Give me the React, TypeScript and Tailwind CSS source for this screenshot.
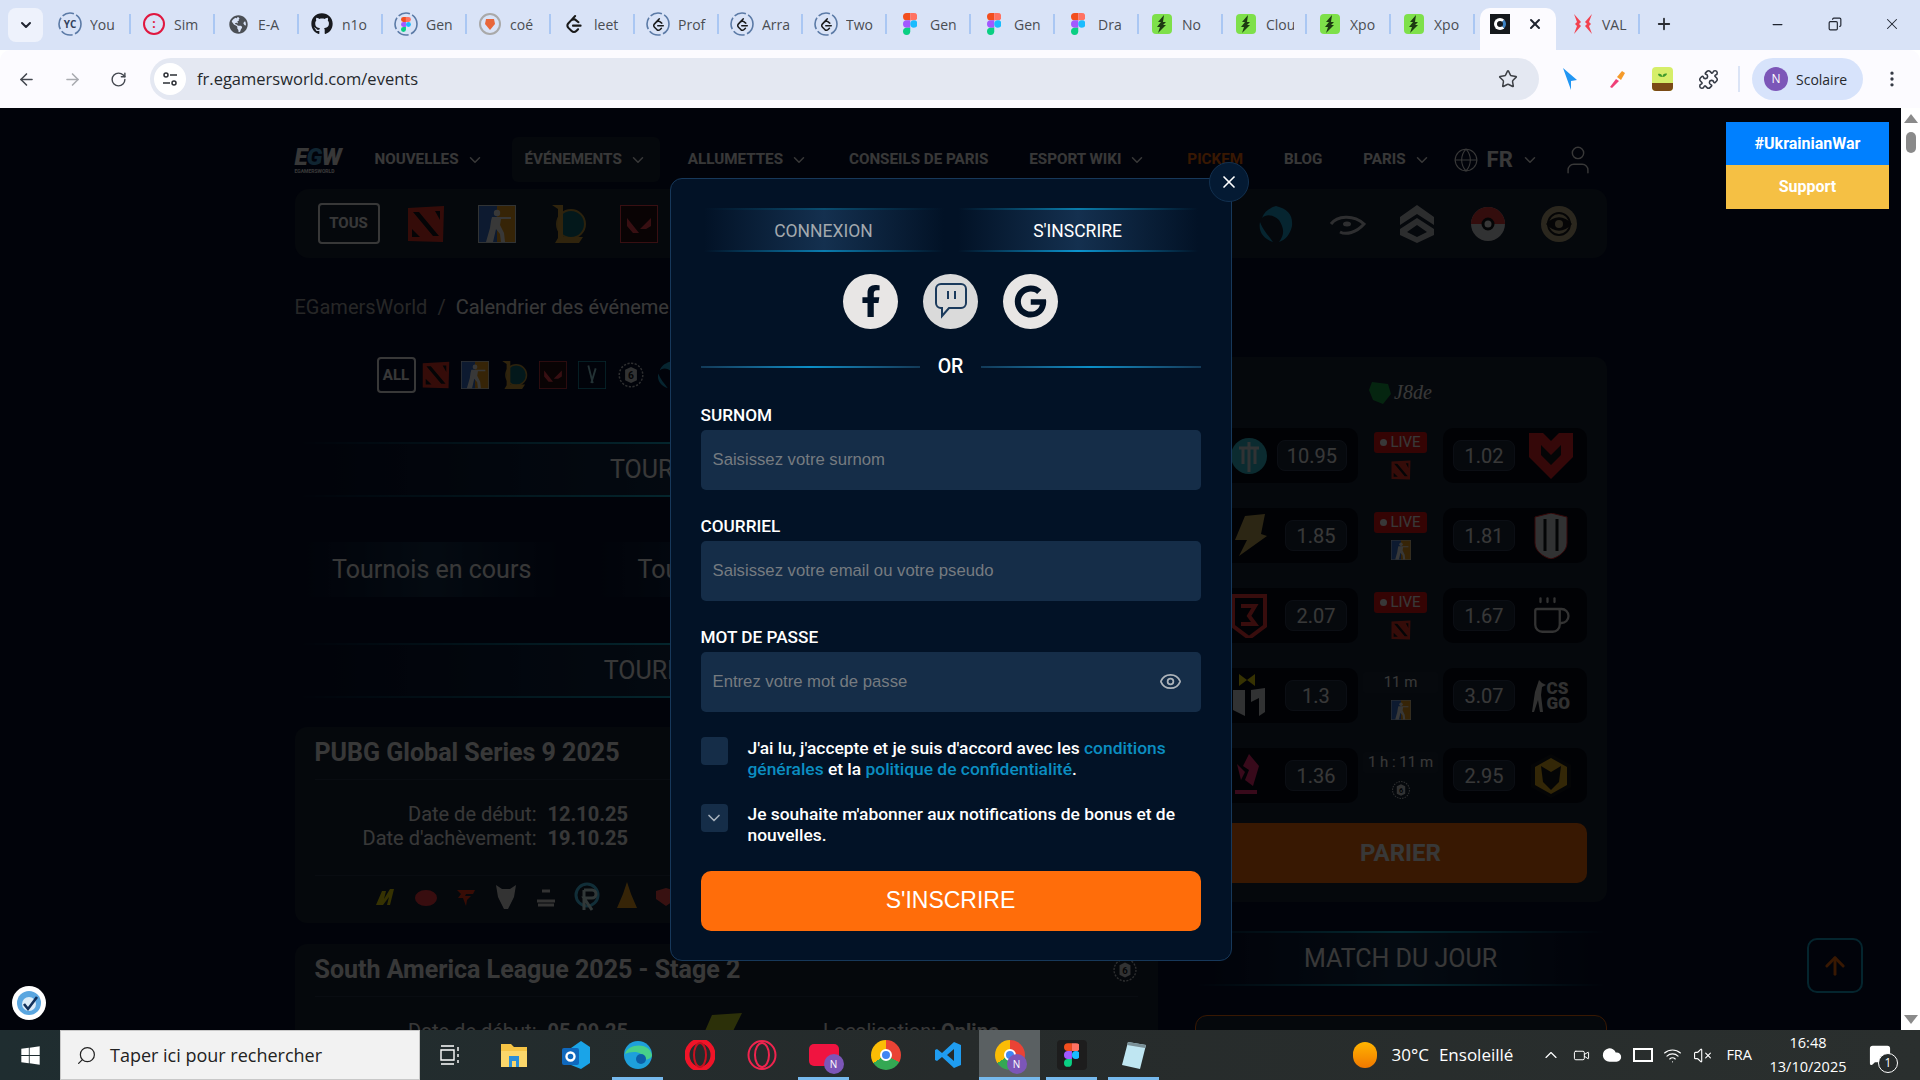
import { ArrowLeft, ArrowRight, RotateCw, Star, Puzzle, MoreVertical, Plus, Minus, X, ChevronDown, ChevronUp, Eye, Globe, User, ArrowUp, Search, Copy, Coffee, VolumeX, Wifi, Cloud, Video, MessageSquare } from 'lucide-react'
import { FaFacebookF, FaGoogle, FaGithub, FaGlobeAmericas, FaWindows } from 'react-icons/fa'
import { SiLeetcode } from 'react-icons/si'

const roboto = 'font-[Roboto,sans-serif]'

function FigmaLogo({ size = 22 }: { size?: number }) {
  return (
    <svg width={size * 0.66} height={size} viewBox="0 0 16 24">
      <path d="M8 0H4a4 4 0 0 0 0 8h4z" fill="#f24e1e" />
      <path d="M8 0h4a4 4 0 0 1 0 8H8z" fill="#ff7262" />
      <path d="M8 8H4a4 4 0 0 0 0 8h4z" fill="#a259ff" />
      <circle cx="12" cy="12" r="4" fill="#1abcfe" />
      <path d="M8 16H4a4 4 0 1 0 4 4z" fill="#0acf83" />
    </svg>
  )
}

function Ring({ children }: { children: React.ReactNode }) {
  return (
    <div className="relative flex h-6 w-6 items-center justify-center">
      <svg className="absolute inset-0" width="24" height="24" viewBox="0 0 24 24">
        <circle cx="12" cy="12" r="11" fill="none" stroke="#5b7aa6" strokeWidth="1.6" strokeDasharray="12 2.5" />
      </svg>
      {children}
    </div>
  )
}

function XpoIcon() {
  return (
    <div className="flex h-5 w-5 items-center justify-center rounded-[4px] bg-[#7ee04a]">
      <svg width="12" height="18" viewBox="0 0 12 18">
        <path d="M8 0 2 7h3L1 12h3l-2 6 8-8H7l3-3H7z" fill="#1d3a12" />
      </svg>
    </div>
  )
}

function Favicon({ kind }: { kind: string }) {
  if (kind === 'yc') return <Ring><span className="font-['Open_Sans',sans-serif] text-[10px] font-bold text-[#33415c]">YC</span></Ring>
  if (kind === 'sim')
    return (
      <div className="flex h-[22px] w-[22px] items-center justify-center rounded-full border-2 border-[#e0173f] text-[12px] font-bold leading-none text-[#e0173f]">:</div>
    )
  if (kind === 'globe') return <FaGlobeAmericas size={19} color="#4b4f55" />
  if (kind === 'github') return <FaGithub size={22} color="#181a1f" />
  if (kind === 'rfigma') return <Ring><FigmaLogo size={15} /></Ring>
  if (kind === 'brave')
    return (
      <div className="flex h-[22px] w-[22px] items-center justify-center rounded-full border-2 border-[#a9a9a9]">
        <svg width="10" height="12" viewBox="0 0 10 12"><path d="M1 1h8l1 5-5 6-5-6z" fill="#e8663a" /></svg>
      </div>
    )
  if (kind === 'leet') return <SiLeetcode size={18} color="#1a1a1a" />
  if (kind === 'rleet') return <Ring><SiLeetcode size={13} color="#1a1a1a" /></Ring>
  if (kind === 'figma') return <FigmaLogo />
  if (kind === 'xpo') return <XpoIcon />
  if (kind === 'egw')
    return (
      <div className="flex h-5 w-5 items-center justify-center bg-[#15181c]">
        <div className="h-3 w-3 rounded-full border-[3px] border-white border-r-[#3b82c4]" />
      </div>
    )
  return (
    <svg width="22" height="22" viewBox="0 0 22 22">
      <path d="M2 1l7 8-2 2 2 2-7 8 3-8-2-2 2-2zM20 1l-7 8 2 2-2 2 7 8-3-8 2-2-2-2z" fill="#f2414f" />
    </svg>
  )
}

const tabs = [
  ['yc', 'You'], ['sim', 'Sim'], ['globe', 'E-A'], ['github', 'n1o'], ['rfigma', 'Gen'], ['brave', 'coé'],
  ['leet', 'leet'], ['rleet', 'Prof'], ['rleet', 'Arra'], ['rleet', 'Two'], ['figma', 'Gen'], ['figma', 'Gen'],
  ['figma', 'Dra'], ['xpo', 'No'], ['xpo', 'Clou'], ['xpo', 'Xpo'], ['xpo', 'Xpo'],
]

function BrowserChrome() {
  return (
    <div className="font-['Open_Sans',sans-serif]">
      <div className="flex h-[50px] items-start bg-[#d9e3f7]">
        <div className="ml-2 mt-2 flex h-[34px] w-[35px] items-center justify-center rounded-lg bg-[#eef2fc]">
          <ChevronDown size={16} strokeWidth={3} color="#1f2430" />
        </div>
        <div className="ml-1 flex h-[50px]">
          {tabs.map(([kind, label], i) => (
            <div key={i} className="relative mt-[3px] flex h-[42px] w-[84px] items-center gap-[8px] self-start pl-[11px]">
              <div className="flex w-6 shrink-0 justify-center"><Favicon kind={kind} /></div>
              <span className="w-[28px] overflow-hidden whitespace-nowrap text-[14px] text-[#4a4d52]">{label}</span>
              <div className="absolute right-0 top-[11px] h-[20px] w-[2px] bg-[#aac7f3]" />
            </div>
          ))}
          <div className="ml-[5px] mt-[8px] flex h-[42px] w-[76px] items-start gap-[17px] rounded-t-[10px] bg-[#fcfbff] pl-[10px] pt-[6px]">
            <Favicon kind="egw" />
            <X size={16} strokeWidth={3} color="#1f2430" className="mt-[2px]" />
          </div>
          <div className="relative mt-[3px] flex h-[42px] w-[84px] items-center gap-[8px] self-start pl-4">
            <Favicon kind="val" />
            <span className="text-[14px] text-[#4a4d52]">VAL</span>
            <div className="absolute right-0 top-[11px] h-[20px] w-[2px] bg-[#aac7f3]" />
          </div>
          <div className="mt-[3px] flex h-[42px] w-[48px] items-center justify-center self-start">
            <Plus size={18} strokeWidth={2.4} color="#2a2d33" />
          </div>
        </div>
        <div className="ml-auto flex h-[50px] items-center pb-[2px]">
          <div className="flex w-[57px] justify-center"><Minus size={15} color="#1f2430" /></div>
          <div className="flex w-[57px] justify-center"><Copy size={14} color="#1f2430" className="-scale-x-100" /></div>
          <div className="flex w-[57px] justify-center"><X size={18} strokeWidth={1.4} color="#1f2430" /></div>
        </div>
      </div>
      <div className="flex h-[58px] items-center rounded-t-[10px] bg-[#fcfbff]">
        <div className="flex w-[52px] justify-center"><ArrowLeft size={19} color="#444850" /></div>
        <div className="flex w-[40px] justify-center"><ArrowRight size={19} color="#a9abb0" /></div>
        <div className="flex w-[52px] justify-center"><RotateCw size={17} color="#444850" /></div>
        <div className="ml-[6px] flex h-[42px] w-[1389px] items-center rounded-full bg-[#e4e8f2] pl-[4px]">
          <div className="flex h-[32px] w-[32px] items-center justify-center rounded-full bg-white">
            <svg width="16" height="16" viewBox="0 0 16 16" fill="none" stroke="#2d3036" strokeWidth="1.5">
              <circle cx="4" cy="4" r="2" /><path d="M8 4h7M1 12h7" /><circle cx="12" cy="12" r="2" />
            </svg>
          </div>
          <span className="ml-[11px] text-[16.5px] text-[#25282d]">fr.egamersworld.com/events</span>
          <Star size={20} strokeWidth={1.8} color="#3d4046" className="ml-auto mr-[21px]" />
        </div>
        <div className="ml-[16px] flex w-[30px] justify-center">
          <svg width="16" height="24" viewBox="0 0 16 24"><path d="M1 1l14 12-6 1v9z" fill="#2196f3" /></svg>
        </div>
        <div className="ml-[17px] flex w-[30px] justify-center">
          <svg width="20" height="20" viewBox="0 0 20 20"><path d="M3 18l6-8 3 2-7 7z" fill="#ef3f78" /><path d="M10 8l5-6 3 2-4 7z" fill="#f59a2a" /></svg>
        </div>
        <div className="relative ml-[20px] flex h-[24px] w-[21px] flex-col justify-end overflow-hidden rounded-[4px] bg-[#d6ee6a]">
          <svg className="absolute left-[5px] top-[5px]" width="11" height="10" viewBox="0 0 11 10"><path d="M5.5 10V5C5 2 3 1 1 2c0 2 2 3 4.5 3 0-3 2-4 4.5-3.500C10 3 8 5 5.500 5" fill="#3f9b2c" /></svg>
          <div className="h-[8px] bg-[#7a4a16]" />
        </div>
        <div className="ml-[21px] flex w-[28px] justify-center"><Puzzle size={21} strokeWidth={1.8} color="#353a45" /></div>
        <div className="ml-[16px] h-[26px] w-[2px] bg-[#dbe4f6]" />
        <div className="ml-[12px] flex h-[42px] w-[111px] items-center gap-[8px] rounded-full bg-[#d7e3fb] pl-[12px]">
          <div className="flex h-[24px] w-[24px] items-center justify-center rounded-full bg-[#7c56b8] text-[12px] text-white">N</div>
          <span className="text-[14px] text-[#25282d]">Scolaire</span>
        </div>
        <div className="ml-[11px] flex w-[36px] justify-center"><MoreVertical size={20} color="#353a45" /></div>
      </div>
    </div>
  )
}

function GameIcon({ kind, size }: { kind: string; size: number }) {
  const s = { width: size, height: size }
  if (kind === 'dota')
    return (
      <svg {...s} viewBox="0 0 38 38">
        <path d="M1 3l36-2-1 36-35-1z" fill="#f23a2c" />
        <path d="M6 7h6l20 24h-6zM28 6h5v9zM5 24l8 8H5z" fill="#12161c" />
      </svg>
    )
  if (kind === 'cs')
    return (
      <svg {...s} viewBox="0 0 38 38">
        <rect width="19" height="38" fill="#3b78d8" /><rect x="19" width="19" height="38" fill="#f5a623" />
        <rect x="0.5" y="0.5" width="37" height="37" fill="none" stroke="#dfe6ee" />
        <circle cx="19" cy="8" r="3.2" fill="#fff" />
        <path d="M14 12h19v2H23l-1 6 4 8 1 9h-4l-1-8-4-5-3 13H8l4-14 1-7z" fill="#fff" />
      </svg>
    )
  if (kind === 'lol')
    return (
      <svg {...s} viewBox="0 0 38 38">
        <circle cx="22" cy="19" r="14" fill="#0e6f7d" stroke="#c89b3c" strokeWidth="2" />
        <path d="M3 0h11v32h20l-4 6H6l3-5V4z" fill="#d8a63c" />
      </svg>
    )
  if (kind === 'val')
    return (
      <svg {...s} viewBox="0 0 38 38">
        <rect x="0.5" y="0.5" width="37" height="37" fill="#2a1014" stroke="#ff4655" />
        <path d="M7 13l12 15h-6L7 21zM31 13v8l-5 3h-6z" fill="#ff4655" />
      </svg>
    )
  if (kind === 'x')
    return (
      <svg {...s} viewBox="0 0 38 38">
        <rect x="0.5" y="0.5" width="37" height="37" fill="none" stroke="#20b6cf" />
        <path d="M14 6l6 24M24 10l-6 20" stroke="#9fe5f0" strokeWidth="2.5" />
      </svg>
    )
  if (kind === 'siege')
    return (
      <svg {...s} viewBox="0 0 38 38" fill="none">
        <circle cx="19" cy="19" r="16" stroke="#cfd3d8" strokeWidth="2" strokeDasharray="3 2" />
        <path d="M19 8l8 4v14l-8 4-8-4V12z" fill="#dfe2e6" />
        <text x="19" y="25" fontSize="14" fontWeight="700" textAnchor="middle" fill="#12161c">6</text>
      </svg>
    )
  if (kind === 'hots')
    return (
      <svg {...s} viewBox="0 0 38 38">
        <path d="M19 1c12 3 17 9 16 20-2 9-7 14-13 16 6-8 5-14 0-22C15 9 9 9 5 13 7 7 12 3 19 1zM3 17c3 8 8 13 13 20C7 34 1 27 3 17z" fill="#1fa8d8" />
      </svg>
    )
  if (kind === 'halo')
    return (
      <svg {...s} viewBox="0 0 38 38" fill="none">
        <path d="M3 19c6-8 22-10 33 0-8 9-18 11-24 8" stroke="#cfd3d8" strokeWidth="3" />
        <ellipse cx="19" cy="19" rx="4" ry="2.5" fill="#cfd3d8" />
      </svg>
    )
  if (kind === 'rank')
    return (
      <svg {...s} viewBox="0 0 38 38">
        <path d="M19 0l17 12v8L19 9 2 20v-8z" fill="#c9ccd1" />
        <path d="M19 13l17 11v6L19 38 2 30v-6zM19 20L9 27l10 5 10-5z" fill="#c9ccd1" fillRule="evenodd" />
      </svg>
    )
  if (kind === 'poke')
    return (
      <svg {...s} viewBox="0 0 38 38">
        <circle cx="19" cy="19" r="17" fill="#e0e2e6" />
        <path d="M2 19a17 17 0 0 1 34 0z" fill="#e83b3b" />
        <circle cx="19" cy="19" r="5" fill="#fff" stroke="#15181c" strokeWidth="3" />
      </svg>
    )
  return (
    <svg {...s} viewBox="0 0 38 38">
      <circle cx="19" cy="19" r="18" fill="#c4b389" />
      <circle cx="19" cy="19" r="11" fill="none" stroke="#181a1e" strokeWidth="2" />
      <path d="M6 19c8-9 18-9 26 0-8 9-18 9-26 0z" fill="#181a1e" />
      <circle cx="19" cy="19" r="4" fill="#c4b389" />
    </svg>
  )
}

const GlowLine = ({ className }: { className: string }) => (
  <div className={`h-[2px] bg-gradient-to-r from-transparent to-transparent ${className}`} />
)

function SectionTitle({ title, className = '' }: { title: string; className?: string }) {
  return (
    <div className={className}>
      <GlowLine className="via-[#16c4e6]" />
      <div className="flex h-[51px] items-center justify-center bg-gradient-to-r from-transparent via-[#14304f] to-transparent text-[25px] text-white">{title}</div>
      <GlowLine className="via-[#16c4e6]" />
    </div>
  )
}

function NavItem({ label, caret = true, active = false, orange = false }: { label: string; caret?: boolean; active?: boolean; orange?: boolean }) {
  return (
    <div className={`flex h-[45px] items-center gap-[7px] rounded-[6px] px-[13px] text-[15.2px] font-bold whitespace-nowrap ${active ? 'bg-[#172437]' : ''} ${orange ? 'text-[#ff6d0a]' : 'text-white'}`}>
      {label}
      {caret && <ChevronDown size={18} color="#fff" />}
    </div>
  )
}

function Header() {
  return (
    <div className="flex h-[45px] items-center">
      <div className="flex w-[52px] flex-col italic leading-none text-white">
        <span className="text-[24px] font-black tracking-[-1px]">E<span className="text-[#4aa8e0]">G</span>W</span>
        <span className="text-[5px] font-bold not-italic">EGAMERSWORLD</span>
      </div>
      <div className="ml-[15px] flex items-center gap-[15px]">
        <NavItem label="NOUVELLES" />
        <NavItem label="ÉVÉNEMENTS" active />
        <NavItem label="ALLUMETTES" />
        <NavItem label="CONSEILS DE PARIS" caret={false} />
        <NavItem label="ESPORT WIKI" />
        <NavItem label="PICKEM" caret={false} orange />
        <NavItem label="BLOG" caret={false} />
        <NavItem label="PARIS" />
      </div>
      <Globe size={26} strokeWidth={1} color="#fff" className="ml-[9px]" />
      <span className="ml-[8px] text-[22px] font-bold text-white">FR</span>
      <ChevronDown size={18} color="#fff" className="ml-[8px]" />
      <User size={34} strokeWidth={1} color="#fff" className="ml-[22px]" />
    </div>
  )
}

const barIcons = ['dota', 'cs', 'lol', 'val', 'x', 'siege', 'hots', 'lol', 'cs', 'dota', 'val', 'x', 'hots', 'halo', 'rank', 'poke', 'eye']
const smallIcons = ['dota', 'cs', 'lol', 'val', 'x', 'siege', 'hots', 'halo']

function TeamMini({ i }: { i: number }) {
  if (i === 0) return <svg width="24" height="24" viewBox="0 0 24 24"><path d="M2 20L8 6h4l-2 8 6-10h4l-4 16h-3l2-8-6 8z" fill="#f5e50a" /></svg>
  if (i === 1) return <svg width="24" height="24" viewBox="0 0 24 24"><ellipse cx="12" cy="13" rx="11" ry="8" fill="#ff3b45" /></svg>
  if (i === 2) return <svg width="24" height="24" viewBox="0 0 24 24"><path d="M3 5h18l-2 4H12l-1 2h6l-4 4-1 6-3-8H4l3-4z" fill="#ff3a1a" /></svg>
  if (i === 3) return <svg width="24" height="28" viewBox="0 0 24 28"><path d="M2 2l6 4h8l6-4-2 12-6 12h-4L4 14z" fill="#e8e8e8" /></svg>
  if (i === 4) return <svg width="24" height="24" viewBox="0 0 24 24"><path d="M8 6h8M3 16h18M4 20h16" stroke="#e8e8e8" strokeWidth="3" /></svg>
  if (i === 5) return <svg width="26" height="30" viewBox="0 0 26 30" fill="none" stroke="#4fd0ff" strokeWidth="3"><circle cx="13" cy="13" r="11" /><path d="M10 8v20M10 8h8a4 4 0 0 1 0 8h-8l8 12" stroke="#dff" /></svg>
  if (i === 6) return <svg width="22" height="30" viewBox="0 0 22 30"><path d="M11 0l4 12 6 14H1L7 12z" fill="#f5a623" /></svg>
  return <svg width="24" height="24" viewBox="0 0 24 24"><path d="M2 6l10-3 10 3v8l-10 7-10-7z" fill="#ff5050" /></svg>
}

function EventCard({ title, start, end, location, icon = 'siege' }: { title: string; start: string; end: string; location?: string; icon?: string }) {
  return (
    <div className="rounded-[12px] bg-[#172437] px-[20px]">
      <div className="flex h-[53px] items-center justify-between border-b border-[#2a3850] text-[25px] font-bold text-white">
        {title}
        <GameIcon kind={icon} size={26} />
      </div>
      <div className="flex h-[96px] items-center border-b border-[#2a3850] pb-[3px] pl-[48px] text-[20px] leading-[24px] text-white">
        <div>
          <div className="flex">
            <span className="w-[174px] text-right">Date de début:</span>
            <b className="ml-[11px]">{start}</b>
          </div>
          <div className="flex">
            <span className="w-[174px] whitespace-nowrap text-right">Date d'achèvement:</span>
            <b className="ml-[11px]">{end}</b>
          </div>
        </div>
        {location && (
          <>
            <svg className="ml-[70px]" width="44" height="60" viewBox="0 0 44 60"><path d="M14 2L44 0 30 28l8 2L6 60l10-26H0z" fill="#c9d82a" /></svg>
            <div className="mb-[24px] ml-[81px] whitespace-nowrap">Localisation: <b>{location}</b></div>
          </>
        )}
      </div>
      <div className="flex h-[47px] items-center gap-[16px] pb-[5px] pl-[59px]">
        {[0, 1, 2, 3, 4, 5, 6, 7].map((i) => <TeamMini key={i} i={i} />)}
      </div>
    </div>
  )
}

function TeamLogo({ kind }: { kind: string }) {
  if (kind === 'teal')
    return <svg width="36" height="44" viewBox="0 0 36 44"><circle cx="18" cy="22" r="18" fill="#34c5d8" /><path d="M8 14h20M18 8v30M12 14v16M24 14v16" stroke="#dfe9ee" strokeWidth="3" /></svg>
  if (kind === 'gold')
    return <svg width="36" height="44" viewBox="0 0 36 44"><path d="M14 2L34 0l-4 20 6 2-28 20 8-16H4z" fill="#c9ad5a" /></svg>
  if (kind === 'red')
    return <svg width="36" height="44" viewBox="0 0 36 44"><path d="M2 2h32v30L18 44 2 32z" fill="none" stroke="#ff3b3b" strokeWidth="4" /><path d="M10 12h14l-6 10 6 8H10" fill="none" stroke="#ff3b3b" strokeWidth="4" /></svg>
  if (kind === 'dn')
    return <svg width="36" height="44" viewBox="0 0 36 44"><path d="M8 0l8 6 8-6v12l-8-6-8 6z" fill="#f5e50a" /><path d="M2 16h12v26L2 36zM20 16l14-2v24l-6 4V24l-8 4z" fill="#dfe2e6" /></svg>
  if (kind === 'pink')
    return <svg width="36" height="44" viewBox="0 0 36 44"><path d="M18 0l10 12-6 20-8-6 4-10-6-4zM6 10l8 8-4 8zM26 36H4v4h22z" fill="#ff2d7a" /></svg>
  if (kind === 'mad')
    return <svg width="44" height="46" viewBox="0 0 44 46"><path d="M0 0h14l8 8 8-8h14v24L22 46 0 24z" fill="#f0242a" /><path d="M12 12l10 10 10-10v10L22 32 12 22z" fill="#15181c" /></svg>
  if (kind === 'shield')
    return <svg width="36" height="46" viewBox="0 0 36 46"><path d="M2 4l16-4 16 4v26c0 8-8 14-16 16C10 44 2 38 2 30z" fill="#dfe2e6" stroke="#f0242a" /><path d="M12 6v32M24 6v32" stroke="#15181c" strokeWidth="3" /></svg>
  if (kind === 'coffee') return <Coffee size={42} strokeWidth={1.3} color="#e6e6e6" />
  if (kind === 'csgo')
    return (
      <div className="flex items-center">
        <svg width="14" height="32" viewBox="0 0 14 32"><path d="M7 0l3 3 4 2-4 2-1 8 2 17H8L6 20 2 32H0l3-20z" fill="#e0e0e0" /></svg>
        <span className="ml-[1px] text-[17px] font-black leading-[15px] text-[#e0e0e0]">CS<br />GO</span>
      </div>
    )
  return (
    <svg width="44" height="44" viewBox="0 0 44 44">
      <path d="M22 0l20 11v22L22 44 2 33V11z" fill="#15181c" />
      <path d="M22 4l16 9v18L22 40 6 31V13z" fill="#e8b020" />
      <path d="M12 12l10 6 10-6-2 16-8 8-8-8z" fill="#15181c" />
    </svg>
  )
}

const matches = [
  { a: '10.95', b: '1.02', la: 'teal', lb: 'mad', tag: 'LIVE', game: 'dota' },
  { a: '1.85', b: '1.81', la: 'gold', lb: 'shield', tag: 'LIVE', game: 'cs' },
  { a: '2.07', b: '1.67', la: 'red', lb: 'coffee', tag: 'LIVE', game: 'dota' },
  { a: '1.3', b: '3.07', la: 'dn', lb: 'csgo', tag: '11 m', game: 'cs' },
  { a: '1.36', b: '2.95', la: 'pink', lb: 'wolf', tag: '1 h : 11 m', game: 'siege' },
]

function OddBox({ value }: { value: string }) {
  return (
    <div className="flex h-[31px] min-w-[62px] items-center justify-center rounded-[8px] border border-[#33435a] bg-[#1d2a3d] px-[9px] text-[20px] text-white">{value}</div>
  )
}

function BetsPanel() {
  return (
    <div className="rounded-[12px] bg-[#172437] px-[20px] pb-[19px] pt-[20px]">
      <div className="flex h-[30px] items-center justify-center gap-[3px] font-['Liberation_Serif',serif] text-[20px] italic text-white">
        <svg width="22" height="24" viewBox="0 0 22 24"><path d="M3 2l16 2 3 10-8 10-10-4-4-10z" fill="#1aa84a" /></svg>
        J8de
      </div>
      <div className="mt-[21px] flex flex-col gap-[25px]">
        {matches.map((m) => (
          <div key={m.a} className="grid h-[55px] grid-cols-[minmax(0,1fr)_85px_minmax(0,1fr)]">
            <div className="flex items-center rounded-[10px] bg-[#060b18] pr-[11px]">
              <div className="mr-[-12px] flex w-[68px] shrink-0 justify-center"><TeamLogo kind={m.la} /></div>
              <div className="ml-auto"><OddBox value={m.a} /></div>
            </div>
            <div className="flex flex-col items-center pt-[4px]">
              {m.tag === 'LIVE' ? (
                <div className="flex h-[21px] w-[53px] items-center justify-center gap-[3px] rounded-[3px] bg-[#f01414] text-[15px] text-white">
                  <span className="h-[7px] w-[7px] rounded-full bg-white" />LIVE
                </div>
              ) : (
                <div className="flex h-[21px] w-[75px] items-center justify-center rounded-[3px] bg-[#1d2a3d] text-[15px] text-white">{m.tag}</div>
              )}
              <div className="mt-[7px]"><GameIcon kind={m.game} size={20} /></div>
            </div>
            <div className="flex items-center rounded-[10px] bg-[#060b18] pl-[10px]">
              <OddBox value={m.b} />
              <div className="flex flex-1 justify-center"><TeamLogo kind={m.lb} /></div>
            </div>
          </div>
        ))}
      </div>
      <div className="mt-[20px] flex h-[60px] items-center justify-center rounded-[10px] bg-[#ff6d0a] text-[24px] font-bold text-white">PARIER</div>
    </div>
  )
}

function PageBehind() {
  return (
    <div className={`h-full bg-[#050e2d] ${roboto}`}>
      <div className="mx-auto w-[1312px] pt-[29px]">
        <Header />
        <div className="mt-[7px] flex h-[69px] items-center gap-[32.8px] rounded-[14px] bg-[#172437] pl-[23px]">
          <div className="mr-[-5px] flex h-[41px] w-[62px] items-center justify-center rounded-[4px] border-2 border-white text-[15px] font-bold text-white">TOUS</div>
          {barIcons.map((k, i) => <GameIcon key={i} kind={k} size={38} />)}
        </div>
        <div className="mt-[34px] flex h-[30px] items-center gap-[10px] whitespace-nowrap text-[20px]">
          <span className="text-[#b0b0b0]">EGamersWorld</span>
          <span className="text-[#b0b0b0]">/</span>
          <span className="text-white">Calendrier des événements</span>
        </div>
        <div className="mt-[35px] flex gap-[37px]">
          <div className="w-[863px] shrink-0">
            <div className="flex h-[36px] items-center gap-[11px] pl-[82px]">
              <div className="mr-[-5px] flex h-[36px] w-[39px] items-center justify-center rounded-[4px] border-2 border-white text-[15px] font-bold text-white">ALL</div>
              {smallIcons.map((k, i) => <GameIcon key={i} kind={k} size={28} />)}
            </div>
            <SectionTitle title="TOURNOIS ACTUELS" className="mt-[49px]" />
            <div className="mt-[45px] grid grid-cols-3 gap-[20px]">
              {['Tournois en cours', 'Tournois à venir', 'Tournois passés'].map((t) => (
                <div key={t} className="flex h-[55px] items-center justify-center bg-gradient-to-r from-transparent via-[#14304f] to-transparent text-[25px] text-white">{t}</div>
              ))}
            </div>
            <SectionTitle title="TOURNOIS EN COURS" className="mt-[46px]" />
            <div className="mt-[29px] flex flex-col gap-[21px]">
              <EventCard title="PUBG Global Series 9 2025" start="12.10.25" end="19.10.25" />
              <EventCard title="South America League 2025 - Stage 2" start="05.09.25" end="19.10.25" location="Online" />
            </div>
          </div>
          <div className="w-[412px] shrink-0">
            <BetsPanel />
            <SectionTitle title="MATCH DU JOUR" className="mt-[29px]" />
            <div className="mt-[29px] h-[60px] rounded-t-[12px] border border-[#ff6d0a] bg-[#172437]" />
          </div>
        </div>
      </div>
    </div>
  )
}

function Field({ label, placeholder, eye = false }: { label: string; placeholder: string; eye?: boolean }) {
  return (
    <div>
      <div className="h-[20px] text-[17.2px] font-medium leading-[20px] text-white">{label}</div>
      <div className="mt-[5px] flex h-[60px] items-center justify-between rounded-[5px] bg-[#152d48] pl-[12px] pr-[19px] font-['Liberation_Sans',sans-serif] text-[16.7px] text-[#767b80]">
        {placeholder}
        {eye && <Eye size={23} strokeWidth={1.8} color="#aeb4ba" />}
      </div>
    </div>
  )
}

function TabHead({ label, active }: { label: string; active: boolean }) {
  return (
    <div>
      <GlowLine className={active ? 'via-[#0a7cab]' : 'via-[#0a4d70]'} />
      <div className={`flex h-[40px] items-center justify-center bg-gradient-to-r from-transparent via-[#14304f] to-transparent pt-[4px] text-[17.5px] ${active ? 'text-white' : 'text-[#a3a9ae]'}`}>{label}</div>
      <GlowLine className={active ? 'via-[#0b95d0]' : 'via-[#0a7db0]'} />
    </div>
  )
}

function SocialButton({ children, bg }: { children: React.ReactNode; bg: string }) {
  return <div className={`flex h-[55px] w-[55px] items-center justify-center rounded-full ${bg}`}>{children}</div>
}

function Modal() {
  return (
    <div className={`relative flex h-[783px] w-[562px] flex-col rounded-[12px] border border-[#17385a] bg-[#021226] px-[30px] pt-[29px] ${roboto}`}>
      <div className="absolute -right-[18px] -top-[17px] flex h-[40px] w-[40px] items-center justify-center rounded-full border border-[#12304f] bg-[#041a33]">
        <X size={20} color="#fff" />
      </div>
      <div className="grid grid-cols-2 gap-[14px] px-[3px]">
        <TabHead label="CONNEXION" active={false} />
        <TabHead label="S'INSCRIRE" active />
      </div>
      <div className="mt-[22px] flex justify-center gap-[25px]">
        <SocialButton bg="bg-[#e8e6e5]"><FaFacebookF size={32} color="#021226" /></SocialButton>
        <SocialButton bg="bg-[#dadada]">
          <svg width="34" height="38" viewBox="0 0 34 38" fill="none" stroke="#1b3a5c" strokeWidth="2">
            <path d="M7 2h20a5 5 0 0 1 5 5v14a5 5 0 0 1-5 5H15l-7 8v-8H7a5 5 0 0 1-5-5V7a5 5 0 0 1 5-5z" />
            <path d="M14 9v8M21 9v8" />
          </svg>
        </SocialButton>
        <SocialButton bg="bg-[#e8e6e5]"><FaGoogle size={33} color="#021226" /></SocialButton>
      </div>
      <div className="mt-[25px] flex h-[26px] items-center">
        <div className="h-[2px] flex-1 bg-gradient-to-r from-[#123a58] via-[#0a8fc7] to-[#123a58]" />
        <span className="w-[61px] text-center text-[19.5px] font-medium text-white">OR</span>
        <div className="h-[2px] flex-1 bg-gradient-to-r from-[#123a58] via-[#0a8fc7] to-[#123a58]" />
      </div>
      <div className="mt-[25px] flex flex-col gap-[26px]">
        <Field label="SURNOM" placeholder="Saisissez votre surnom" />
        <Field label="COURRIEL" placeholder="Saisissez votre email ou votre pseudo" />
        <Field label="MOT DE PASSE" placeholder="Entrez votre mot de passe" eye />
      </div>
      <div className="mt-[25px] flex gap-[20px] text-[17.4px] font-medium leading-[21px] text-white">
        <div className="h-[28px] w-[27px] shrink-0 rounded-[4px] bg-[#152d48]" />
        <p className="pt-[1px]">
          J'ai lu, j'accepte et je suis d'accord avec les <span className="text-[#0b8ec1]">conditions générales</span> et la <span className="text-[#0b8ec1]">politique de confidentialité</span>.
        </p>
      </div>
      <div className="mt-[24px] flex gap-[20px] text-[17.4px] font-medium leading-[21px] text-white">
        <div className="flex h-[28px] w-[27px] shrink-0 items-center justify-center rounded-[4px] bg-[#152d48]">
          <ChevronDown size={20} color="#a6b0ba" />
        </div>
        <p>Je souhaite m'abonner aux notifications de bonus et de nouvelles.</p>
      </div>
      <div className="mt-[25px] flex h-[60px] items-center justify-center rounded-[10px] bg-[#ff6d0a] font-['Liberation_Sans',sans-serif] text-[23px] text-white">S'INSCRIRE</div>
    </div>
  )
}

function ScrollBar() {
  return (
    <div className="flex w-[19px] flex-col items-center bg-white pt-[6px]">
      <svg width="14" height="9" viewBox="0 0 14 9"><path d="M7 0l7 9H0z" fill="#8a8a8a" /></svg>
      <div className="mt-[9px] h-[21px] w-[10px] rounded-full bg-[#8a8a8a]" />
      <svg className="mb-[6px] mt-auto" width="14" height="9" viewBox="0 0 14 9"><path d="M7 9l7-9H0z" fill="#8a8a8a" /></svg>
    </div>
  )
}

function TaskIcon({ children, under = false, active = false }: { children: React.ReactNode; under?: boolean; active?: boolean }) {
  return (
    <div className={`relative flex h-[50px] w-[61px] items-center justify-center ${active ? 'bg-[#5a6062]' : ''}`}>
      {children}
      {under && <div className={`absolute bottom-0 h-[3px] bg-[#76b9ed] ${active ? 'w-full' : 'w-[51px]'}`} />}
    </div>
  )
}

function ChromeLogo({ badge }: { badge: boolean }) {
  return (
    <div className="relative h-[30px] w-[30px]">
      <div className="h-full w-full rounded-full bg-[conic-gradient(#ea4335_0_33%,#34a853_33%_66%,#fbbc05_66%_100%)]" />
      <div className="absolute left-[9px] top-[9px] h-[12px] w-[12px] rounded-full border-2 border-white bg-[#4285f4]" />
      {badge && <div className="absolute -bottom-[4px] -right-[2px] flex h-[20px] w-[20px] items-center justify-center rounded-full bg-[#7c56b8] text-[10px] text-white">N</div>}
    </div>
  )
}

function Taskbar() {
  return (
    <div className="flex h-[50px] items-center bg-gradient-to-r from-[#1f2d30] via-[#262b2b] to-[#2a2f2e] font-['Open_Sans',sans-serif] text-white">
      <div className="flex w-[60px] justify-center"><FaWindows size={21} color="#fff" /></div>
      <div className="flex h-[50px] w-[360px] items-center gap-[13px] border border-[#c8c8c8] bg-[#f2f2f2] pl-[15px] text-[18px] text-[#222]">
        <Search size={21} strokeWidth={1.4} color="#222" className="-scale-x-100" />
        Taper ici pour rechercher
      </div>
      <div className="flex w-[60px] justify-center">
        <svg width="20" height="20" viewBox="0 0 20 20" fill="none" stroke="#fff" strokeWidth="1.4"><path d="M1 1h13M1 19h13M1 5h13v10H1zM18 2v4M18 9v3M18 15v3" /></svg>
      </div>
      <div className="ml-[3px] flex gap-[1px]">
        <TaskIcon>
          <svg width="28" height="28" viewBox="0 0 28 28"><path d="M1 3h10l3 3h13v20H1z" fill="#f6c445" /><path d="M1 10h26v16H1z" fill="#fbd76a" /><path d="M9 15h10v11h-3v-6h-4v6H9z" fill="#2a8ed8" /></svg>
        </TaskIcon>
        <TaskIcon>
          <svg width="30" height="30" viewBox="0 0 30 30"><path d="M10 8l10-7 9 6v16l-9 6-10-4z" fill="#1aa4e8" /><rect x="1" y="8" width="17" height="17" rx="2" fill="#0f68bd" /><circle cx="9.5" cy="16.5" r="4" fill="none" stroke="#fff" strokeWidth="2.4" /></svg>
        </TaskIcon>
        <TaskIcon under>
          <svg width="30" height="30" viewBox="0 0 30 30"><circle cx="15" cy="15" r="14" fill="#1ea0db" /><path d="M2 14C4 4 26 1 29 15c0 5-10 6-13 3-2-2 0-4 2-4-4-3-12-2-16 0z" fill="#48d08a" /><circle cx="18" cy="19" r="5" fill="#0c5fa8" /></svg>
        </TaskIcon>
        <TaskIcon>
          <svg width="30" height="30" viewBox="0 0 30 30"><ellipse cx="15" cy="15" rx="13" ry="14" fill="none" stroke="#f01428" strokeWidth="5" /><ellipse cx="15" cy="15" rx="6" ry="12" fill="none" stroke="#c8101f" strokeWidth="2" /></svg>
        </TaskIcon>
        <TaskIcon>
          <svg width="30" height="30" viewBox="0 0 30 30" fill="none" stroke="#f0244e" strokeWidth="2"><ellipse cx="15" cy="15" rx="13.5" ry="14" /><ellipse cx="15" cy="15" rx="7" ry="12" /></svg>
        </TaskIcon>
        <TaskIcon under>
          <div className="relative h-[22px] w-[30px] rounded-[5px] bg-[#f01440]">
            <div className="absolute -bottom-[8px] -right-[5px] flex h-[20px] w-[20px] items-center justify-center rounded-full bg-[#7c56b8] text-[10px]">N</div>
          </div>
        </TaskIcon>
        <TaskIcon><ChromeLogo badge={false} /></TaskIcon>
        <TaskIcon>
          <svg width="28" height="28" viewBox="0 0 28 28"><path d="M20 1l7 3v20l-7 3-12-11-5 4-2-1V9l2-1 5 4zM20 8l-7 6 7 6z" fill="#1f9cf0" fillRule="evenodd" /></svg>
        </TaskIcon>
        <TaskIcon under active><ChromeLogo badge /></TaskIcon>
        <TaskIcon under>
          <div className="flex h-[30px] w-[30px] items-center justify-center rounded-[4px] bg-[#1d1d1d]"><FigmaLogo size={24} /></div>
        </TaskIcon>
        <TaskIcon under>
          <svg width="28" height="30" viewBox="0 0 28 30"><path d="M8 2l18 3-6 24-18-4z" fill="#bfe6f2" /><path d="M8 2l18 3-1 3-18-3z" fill="#7a8f96" /></svg>
        </TaskIcon>
      </div>
      <div className="ml-auto flex h-[50px] items-center pr-[29px] text-[17px]">
        <div className="h-[26px] w-[24px] rounded-full bg-gradient-to-b from-[#ffb400] to-[#f07800]" />
        <span className="ml-[14px]">30°C</span>
        <span className="ml-[10px]">Ensoleillé</span>
        <ChevronUp size={20} strokeWidth={1.4} className="ml-[28px]" />
        <Video size={17} strokeWidth={1.4} className="ml-[12px]" />
        <Cloud size={20} fill="#fff" className="ml-[12px]" />
        <div className="ml-[11px] h-[14px] w-[20px] border-2 border-white" />
        <Wifi size={19} strokeWidth={1.4} className="ml-[10px]" />
        <VolumeX size={19} strokeWidth={1.4} className="ml-[11px]" />
        <span className="ml-[14px] text-[14.5px]">FRA</span>
        <div className="ml-[18px] flex w-[76px] flex-col items-center text-[14.5px] leading-[24px]">
          <span>16:48</span>
          <span>13/10/2025</span>
        </div>
        <div className="relative ml-[23px]">
          <MessageSquare size={22} fill="#fff" color="#fff" />
          <div className="absolute -bottom-[7px] -right-[7px] flex h-[20px] w-[20px] items-center justify-center rounded-full border border-white bg-[#262b2b] text-[12px]">1</div>
        </div>
      </div>
    </div>
  )
}

export default function App() {
  return (
    <div className="flex h-screen w-full flex-col overflow-hidden">
      <BrowserChrome />
      <div className="flex min-h-0 flex-1">
        <div className="relative min-w-0 flex-1 overflow-hidden">
          <PageBehind />
          <div className="absolute bottom-[37px] right-[38px] flex h-[55px] w-[56px] items-center justify-center rounded-[10px] border-2 border-[#16a8d0]">
            <ArrowUp size={28} strokeWidth={2.5} color="#ff6d0a" />
          </div>
          <div className="absolute inset-0 bg-black/[0.78]" />
          <div className="absolute inset-0 flex items-center justify-center">
            <Modal />
          </div>
          <div className={`absolute right-[12px] top-[14px] w-[163px] text-center text-[16px] font-bold text-white ${roboto}`}>
            <div className="flex h-[43px] items-center justify-center bg-[#0080ff]">#UkrainianWar</div>
            <div className="flex h-[44px] items-center justify-center bg-[#f5c044]">Support</div>
          </div>
          <div className="absolute bottom-[10px] left-[12px] flex h-[34px] w-[34px] items-center justify-center rounded-full bg-white">
            <svg width="28" height="28" viewBox="0 0 28 28">
              <circle cx="14" cy="14" r="12" fill="#5aa6e0" />
              <circle cx="14" cy="15" r="7" fill="#dcecf8" />
              <path d="M9 15l4 5 9-12" fill="none" stroke="#12305a" strokeWidth="2.6" />
            </svg>
          </div>
        </div>
        <ScrollBar />
      </div>
      <Taskbar />
    </div>
  )
}
